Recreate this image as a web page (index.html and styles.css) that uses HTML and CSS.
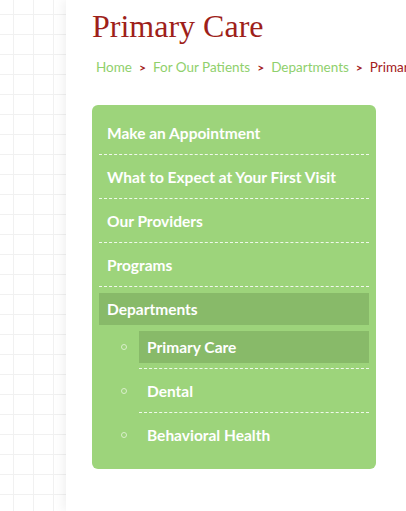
FILE: index.html
```html
<!DOCTYPE html>
<html lang="en">
<head>
<meta charset="utf-8">
<title>Primary Care</title>
<link rel="stylesheet" href="styles.css">
</head>
<body>
<div class="page">
  <div class="backdrop"></div>
  <main class="main">
    <h1 class="title">Primary Care</h1>
    <nav class="crumbs">
      <a class="crumb" href="#">Home</a><span class="sep">&gt;</span><a class="crumb" href="#">For Our Patients</a><span class="sep">&gt;</span><a class="crumb" href="#">Departments</a><span class="sep">&gt;</span><span class="current">Primary Care</span>
    </nav>
    <ul class="menu">
      <li class="item"><a class="link" href="#">Make an Appointment</a></li>
      <li class="item"><a class="link" href="#">What to Expect at Your First Visit</a></li>
      <li class="item"><a class="link" href="#">Our Providers</a></li>
      <li class="item"><a class="link" href="#">Programs</a></li>
      <li class="item item-open">
        <a class="link link-active" href="#">Departments</a>
        <ul class="submenu">
          <li class="subitem"><a class="link link-active" href="#">Primary Care</a></li>
          <li class="subitem"><a class="link" href="#">Dental</a></li>
          <li class="subitem subitem-last"><a class="link" href="#">Behavioral Health</a></li>
        </ul>
      </li>
    </ul>
  </main>
</div>
</body>
</html>
```

FILE: styles.css
```css
html, body {
  margin: 0;
  padding: 0;
  background: #ffffff;
}

.page {
  display: flex;
  min-height: 511px;
  width: 406px;
  overflow: hidden;
}

.backdrop {
  flex: 0 0 66px;
  background-color: #ffffff;
  background-image:
    linear-gradient(to right, #f1f1f1 1px, transparent 1px),
    linear-gradient(to bottom, #f1f1f1 1px, transparent 1px);
  background-size: 20px 20px;
  background-position: 13px 14px;
}

.main {
  flex: 1 1 auto;
  min-width: 0;
  background: #ffffff;
  box-shadow: -3px 0 10px rgba(0, 0, 0, 0.06);
  padding: 6px 0 0 26px;
  position: relative;
}

.title {
  margin: 0;
  font-family: "Liberation Serif", "Times New Roman", serif;
  font-weight: normal;
  font-size: 32px;
  line-height: 40px;
  color: #9e1f1a;
}

.crumbs {
  margin: 11px 0 0 4px;
  font-family: Lato, "Liberation Sans", sans-serif;
  font-size: 13.5px;
  line-height: 20px;
  white-space: nowrap;
}

.crumb {
  color: #8fd06c;
  text-decoration: none;
}

.sep {
  color: #a3201c;
  font-weight: bold;
  font-size: 12px;
  margin: 0 7px 0 7px;
}

.current {
  color: #a3201c;
}

.menu {
  list-style: none;
  margin: 27px 0 0 0;
  padding: 6px 7px 13px;
  width: 270px;
  background: #9dd47b;
  border-radius: 6px;
  font-family: Lato, "Liberation Sans", sans-serif;
  font-size: 15.5px;
  font-weight: bold;
}

.item {
  padding: 6px 0 5px;
  border-bottom: 1px dashed rgba(255, 255, 255, 0.85);
}

.item-open {
  border-bottom: none;
  padding-bottom: 0;
}

.link {
  display: block;
  padding: 6px 8px;
  line-height: 20px;
  color: #ffffff;
  text-decoration: none;
}

.link-active {
  background: #88ba69;
}

.submenu {
  list-style: none;
  margin: 0 0 0 40px;
  padding: 0;
}

.subitem {
  position: relative;
  padding: 6px 0 5px;
  border-bottom: 1px dashed rgba(255, 255, 255, 0.85);
}

.subitem-last {
  border-bottom: none;
}

.subitem::before {
  content: "";
  position: absolute;
  left: -18px;
  top: 19px;
  width: 4px;
  height: 4px;
  border: 1px solid #d9efcb;
  border-radius: 50%;
}
```
